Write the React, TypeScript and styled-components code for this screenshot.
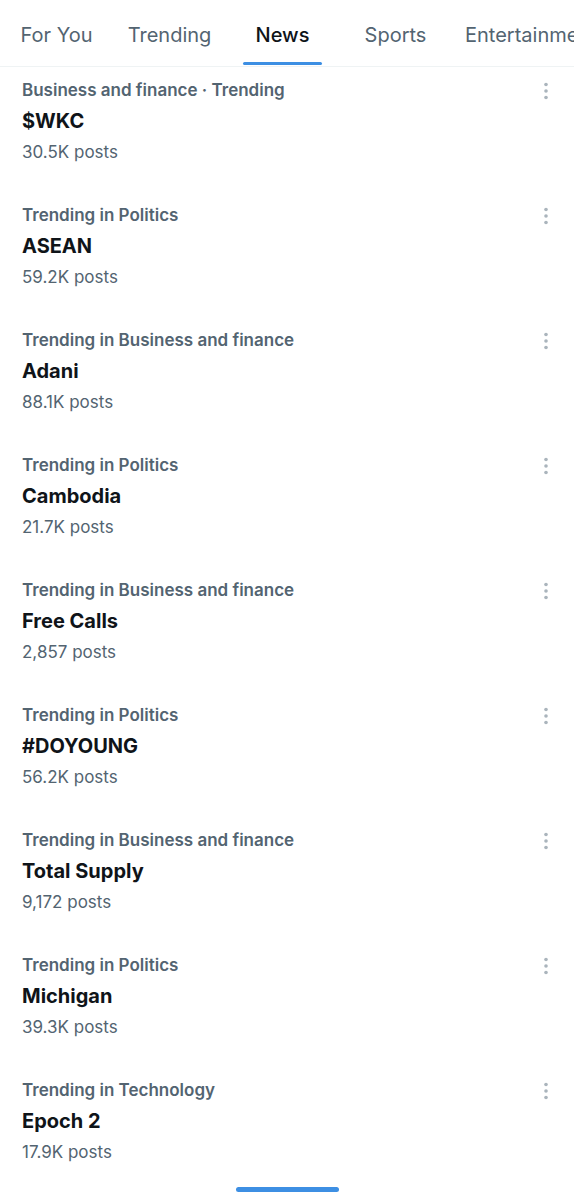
import styled, { createGlobalStyle } from 'styled-components'

const GlobalStyle = createGlobalStyle`
  body {
    margin: 0;
    background: #ffffff;
    font-family: Inter, Roboto, "Liberation Sans", sans-serif;
    -webkit-font-smoothing: antialiased;
  }
`

const Page = styled.div`
  width: 574px;
  background: #ffffff;
  overflow: hidden;
`

const TabBar = styled.nav`
  display: flex;
  height: 66px;
  border-bottom: 1px solid #eff3f4;
  white-space: nowrap;
  overflow: hidden;
`

const Tab = styled.div`
  flex: 0 0 auto;
  min-width: 113px;
  padding-top: 23px;
  box-sizing: border-box;
  display: flex;
  justify-content: center;
`

const LabelWrap = styled.div`
  display: flex;
  flex-direction: column;
`

const Label = styled.span<{active: boolean}>`
  padding: 0 13px;
  font-size: 20px;
  line-height: 24px;
  font-weight: ${props => props.active ? 500 : 400};
  color: ${props => props.active ? '#0f1419' : '#536471'};
`

const Bar = styled.span<{active: boolean}>`
  height: 3px;
  margin-top: 15px;
  border-radius: 2px;
  background: ${props => props.active ? '#3d8fe3' : 'transparent'};
`

const List = styled.div`
  display: flex;
  flex-direction: column;
`

const Item = styled.div`
  display: flex;
  justify-content: space-between;
  align-items: flex-start;
  padding: 8px 25px 24px 22px;

  &:last-child {
    padding-bottom: 19px;
  }
`

const Body = styled.div`
  display: flex;
  flex-direction: column;
`

const Category = styled.div`
  font-size: 17px;
  line-height: 31px;
  font-weight: 600;
  color: #536471;
`

const Title = styled.div`
  font-size: 20px;
  line-height: 31px;
  font-weight: 700;
  color: #0f1419;
`

const Posts = styled.div`
  font-size: 17px;
  line-height: 31px;
  color: #536471;
`

const More = styled.svg`
  margin-top: 6px;
  flex: 0 0 auto;
`

const Handle = styled.div`
  width: 103px;
  height: 5px;
  margin: 0 auto 8px;
  border-radius: 3px;
  background: #3d8fe3;
`

const tabs = ['For You', 'Trending', 'News', 'Sports', 'Entertainment']

const trends = [
  {category: 'Business and finance · Trending', title: '$WKC', posts: '30.5K posts'},
  {category: 'Trending in Politics', title: 'ASEAN', posts: '59.2K posts'},
  {category: 'Trending in Business and finance', title: 'Adani', posts: '88.1K posts'},
  {category: 'Trending in Politics', title: 'Cambodia', posts: '21.7K posts'},
  {category: 'Trending in Business and finance', title: 'Free Calls', posts: '2,857 posts'},
  {category: 'Trending in Politics', title: '#DOYOUNG', posts: '56.2K posts'},
  {category: 'Trending in Business and finance', title: 'Total Supply', posts: '9,172 posts'},
  {category: 'Trending in Politics', title: 'Michigan', posts: '39.3K posts'},
  {category: 'Trending in Technology', title: 'Epoch 2', posts: '17.9K posts'},
]

const MoreIcon = () => (
  <More width="6" height="20" viewBox="0 0 6 20">
    <circle cx="3" cy="3.5" r="1.8" fill="#aab4bc" />
    <circle cx="3" cy="10" r="1.8" fill="#aab4bc" />
    <circle cx="3" cy="16.5" r="1.8" fill="#aab4bc" />
  </More>
)

export default function App() {
  return (
    <Page>
      <GlobalStyle />
      <TabBar>
        {tabs.map(t => (
          <Tab key={t}>
            <LabelWrap>
              <Label active={t === 'News'}>{t}</Label>
              <Bar active={t === 'News'} />
            </LabelWrap>
          </Tab>
        ))}
      </TabBar>
      <List>
        {trends.map((t, i) => (
          <Item key={i}>
            <Body>
              <Category>{t.category}</Category>
              <Title>{t.title}</Title>
              <Posts>{t.posts}</Posts>
            </Body>
            <MoreIcon />
          </Item>
        ))}
      </List>
      <Handle />
    </Page>
  )
}
